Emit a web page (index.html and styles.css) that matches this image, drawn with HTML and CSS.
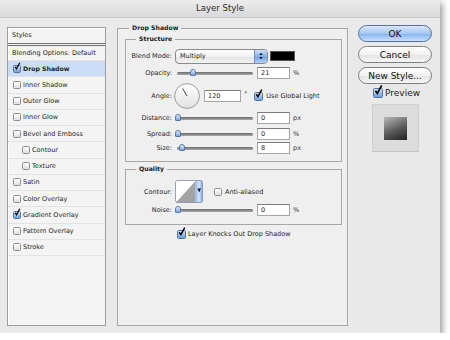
FILE: index.html
```html
<!DOCTYPE html>
<html lang="en">
<head>
  <meta charset="UTF-8" />
  <title>Layer Style</title>
  <link rel="stylesheet" href="styles.css">
</head>
<body>
<div class="window">
  <div class="titlebar">Layer Style</div>
  <div class="content">
    <div class="styles-list">
      <div class="list-head">Styles</div>
      <div class="list-row blending">Blending Options: Default</div>
      <div class="list-row selected"><span class="cb on"><svg viewBox="0 0 10 10"><path d="M1.8 4.6 L4.2 8 L9.6 -2"/></svg></span>Drop Shadow</div>
      <div class="list-row"><span class="cb"></span>Inner Shadow</div>
      <div class="list-row"><span class="cb"></span>Outer Glow</div>
      <div class="list-row"><span class="cb"></span>Inner Glow</div>
      <div class="list-row"><span class="cb"></span>Bevel and Emboss</div>
      <div class="list-row sub"><span class="cb"></span>Contour</div>
      <div class="list-row sub"><span class="cb"></span>Texture</div>
      <div class="list-row"><span class="cb"></span>Satin</div>
      <div class="list-row"><span class="cb"></span>Color Overlay</div>
      <div class="list-row"><span class="cb on"><svg viewBox="0 0 10 10"><path d="M1.8 4.6 L4.2 8 L9.6 -2"/></svg></span>Gradient Overlay</div>
      <div class="list-row"><span class="cb"></span>Pattern Overlay</div>
      <div class="list-row"><span class="cb"></span>Stroke</div>
    </div>

    <fieldset class="group main-group">
      <legend>Drop Shadow</legend>

      <fieldset class="group structure">
        <legend>Structure</legend>
        <div class="row r-blend">
          <label>Blend Mode:</label>
          <div class="popup">
            <span class="popup-text">Multiply</span>
            <span class="popup-arrows"><svg viewBox="0 0 5 9"><path d="M2.5 0.5 L4.6 3.4 H0.4 Z M2.5 8.5 L4.6 5.6 H0.4 Z"/></svg></span>
          </div>
          <span class="swatch"></span>
        </div>
        <div class="row r-opacity">
          <label>Opacity:</label>
          <div class="slider"><span class="thumb" style="left:15px"></span></div>
          <span class="field">21</span><span class="unit">%</span>
        </div>
        <div class="row r-angle">
          <label>Angle:</label>
          <svg class="dial" viewBox="0 0 26 26">
            <defs>
              <linearGradient id="dialfill" x1="0" y1="0" x2="0" y2="1">
                <stop offset="0" stop-color="#ffffff"/>
                <stop offset="1" stop-color="#e1e1e1"/>
              </linearGradient>
            </defs>
            <circle cx="13" cy="13" r="12.4" fill="url(#dialfill)" stroke="#858585" stroke-width="0.8"/>
            <path d="M13 13 L8.6 5.4" stroke="#444" stroke-width="1"/>
          </svg>
          <span class="field angle-field">120</span><span class="unit deg">°</span>
          <span class="cb lg on global"><svg viewBox="0 0 10 10"><path d="M1.8 4.6 L4.2 8 L9.6 -2"/></svg></span>
          <span class="check-text">Use Global Light</span>
        </div>
        <div class="row r-distance">
          <label>Distance:</label>
          <div class="slider"><span class="thumb" style="left:0px"></span></div>
          <span class="field">0</span><span class="unit">px</span>
        </div>
        <div class="row r-spread">
          <label>Spread:</label>
          <div class="slider"><span class="thumb" style="left:0px"></span></div>
          <span class="field">0</span><span class="unit">%</span>
        </div>
        <div class="row r-size">
          <label>Size:</label>
          <div class="slider"><span class="thumb" style="left:4px"></span></div>
          <span class="field">8</span><span class="unit">px</span>
        </div>
      </fieldset>

      <fieldset class="group quality">
        <legend>Quality</legend>
        <div class="row r-contour">
          <label>Contour:</label>
          <svg class="contour" viewBox="0 0 28 23">
            <defs>
              <linearGradient id="arrowfill" x1="0" y1="0" x2="1" y2="0">
                <stop offset="0" stop-color="#8fb6ea"/>
                <stop offset="0.5" stop-color="#d9e7fa"/>
                <stop offset="1" stop-color="#7aa6e2"/>
              </linearGradient>
            </defs>
            <rect x="0.5" y="0.5" width="20" height="22" fill="#fff"/>
            <path d="M1 22.5 L20.5 1 V22.5 Z" fill="#a3a3a3"/>
            <path d="M20.5 0.5 H25 Q27.5 0.5 27.5 3 V20 Q27.5 22.5 25 22.5 H20.5 Z" fill="url(#arrowfill)"/>
            <rect x="0.5" y="0.5" width="27" height="22" rx="2" fill="none" stroke="#7f8ea5" stroke-width="0.8"/>
            <path d="M22.4 8.5 H26 L24.2 12.5 Z" fill="#111"/>
          </svg>
          <span class="cb aa"></span>
          <span class="check-text">Anti-aliased</span>
        </div>
        <div class="row r-noise">
          <label>Noise:</label>
          <div class="slider"><span class="thumb" style="left:0px"></span></div>
          <span class="field">0</span><span class="unit">%</span>
        </div>
      </fieldset>

      <div class="knock">
        <span class="cb lg on"><svg viewBox="0 0 10 10"><path d="M1.8 4.6 L4.2 8 L9.6 -2"/></svg></span>
        <span class="check-text">Layer Knocks Out Drop Shadow</span>
      </div>
    </fieldset>

    <div class="buttons">
      <button class="btn default">OK</button>
      <button class="btn">Cancel</button>
      <button class="btn">New Style...</button>
      <div class="preview-check">
        <span class="cb xl on"><svg viewBox="0 0 10 10"><path d="M1.8 4.6 L4.2 8 L9.6 -2"/></svg></span>
        Preview
      </div>
      <div class="preview-box"><div class="preview-swatch"></div></div>
    </div>
  </div>
</div>
</body>
</html>
```

FILE: styles.css
```css
* {
  box-sizing: border-box;
}
html, body {
  margin: 0;
  padding: 0;
  background: #ffffff;
  font-family: "DejaVu Sans", Verdana, sans-serif;
  color: #1e1e1e;
}
.window {
  width: 440px;
  height: 333px;
  background: #e9e9e9;
  box-shadow: 2px 3px 7px rgba(0,0,0,0.45);
}
.titlebar {
  height: 18px;
  line-height: 17px;
  text-align: center;
  font-size: 8.5px;
  color: #2b2b2b;
  background: linear-gradient(#ececec, #d9d9d9);
  border-bottom: 1px solid #c8c8c8;
}
.content {
  display: flex;
  align-items: flex-start;
  padding: 6px 0 0 7px;
}

/* style list on the left */
.styles-list {
  width: 99px;
  height: 299px;
  margin-top: 3px;
  background: #f4f4f4;
  border: 1px solid #9d9d9d;
  box-shadow: inset 1px 1px 0 #ffffff;
  font-size: 6.5px;
}
.list-head {
  height: 18px;
  line-height: 15px;
  padding-left: 4px;
  border-bottom: 3px double #6f6f6f;
}
.list-row {
  display: flex;
  align-items: center;
  gap: 2px;
  height: 16.25px;
  padding-left: 5px;
  border-bottom: 1px solid #e3e3e3;
}
.list-row.blending {
  height: 15px;
  padding-left: 4px;
}
.list-row.sub {
  padding-left: 14px;
}
.list-row.selected {
  background: #cadcf6;
  font-weight: bold;
  font-size: 6.2px;
}

/* checkboxes */
.cb {
  position: relative;
  flex: none;
  display: inline-block;
  width: 8px;
  height: 8px;
  border: 1px solid #8d8d8d;
  border-radius: 1.5px;
  background: linear-gradient(#ffffff, #dedede);
}
.cb.lg {
  width: 9px;
  height: 9px;
}
.cb.xl {
  width: 10px;
  height: 10px;
}
.cb.on {
  background: linear-gradient(#d3e3f8, #6f9fe0);
  border-color: #53739f;
}
.cb svg {
  position: absolute;
  left: 0;
  top: -2px;
  width: 100%;
  height: 100%;
  overflow: visible;
  fill: none;
  stroke: #000000;
  stroke-width: 2.1;
}

/* group boxes */
.group {
  margin: 0;
  padding: 0;
  border: 1px solid #a7a7a7;
  background: #efefef;
  min-inline-size: 0;
}
.group > legend {
  padding: 0 3px;
  line-height: 8px;
  font-size: 6.2px;
  font-weight: bold;
  color: #222;
}
.main-group {
  width: 231px;
  height: 302px;
  margin-left: 11px;
  padding: 0 6px 0 7px;
}
.main-group > legend {
  margin-left: 4px;
}
.structure {
  width: 217px;
  height: 127px;
  margin-top: 3px;
  padding-top: 5px;
}
.quality {
  width: 217px;
  height: 60px;
  margin-top: 3px;
  padding-top: 7px;
}
.structure > legend, .quality > legend {
  margin-left: 10px;
}

/* rows of controls */
.row {
  display: flex;
  align-items: center;
  font-size: 6.5px;
}
.row > label {
  flex: none;
  width: 46px;
  text-align: right;
  color: #262626;
}
.r-blend { height: 16px; }
.r-opacity { height: 18px; }
.r-angle { height: 28px; }
.r-distance { height: 16px; }
.r-spread { height: 15px; }
.r-size { height: 14px; }
.r-contour { height: 23px; }
.r-noise { height: 14px; }

.popup {
  display: flex;
  width: 93px;
  height: 15px;
  margin-left: 3px;
  border: 1px solid #8a8a8a;
  border-radius: 4px;
  background: linear-gradient(#ffffff, #f1f1f1 50%, #e4e4e4 51%, #f3f3f3);
  overflow: hidden;
}
.popup-text {
  flex: 1;
  padding-left: 4px;
  line-height: 13px;
}
.popup-arrows {
  width: 13px;
  display: flex;
  align-items: center;
  justify-content: center;
  border-left: 1px solid #6f8fbf;
  background: linear-gradient(#cfe0f8, #85b0ea 50%, #6b9fe4 51%, #b6d2f7);
}
.popup-arrows svg {
  width: 4px;
  height: 8px;
  fill: #111;
}
.swatch {
  width: 25px;
  height: 10px;
  margin-left: 2px;
  background: #000000;
  border: 1px solid #555;
}

.slider {
  position: relative;
  flex: none;
  width: 78px;
  height: 8px;
  margin-left: 3px;
}
.slider::before {
  content: "";
  position: absolute;
  left: 2px;
  right: 0;
  top: 3px;
  height: 3px;
  border-radius: 2px;
  background: linear-gradient(#6b6b6b, #a9a9a9);
}
.thumb {
  position: absolute;
  top: 0;
  width: 6px;
  height: 7px;
  border-radius: 3px 3px 1px 1px;
  border: 1px solid #5677a8;
  background: linear-gradient(#e6eefa, #75a2e2);
}
.field {
  flex: none;
  width: 33px;
  height: 12px;
  margin-left: 4px;
  padding-left: 3px;
  line-height: 10px;
  background: #ffffff;
  border: 1px solid #a5a5a5;
  border-top-color: #7c7c7c;
}
.unit {
  margin-left: 3px;
  color: #333;
}
.dial {
  flex: none;
  width: 26px;
  height: 26px;
  margin-left: 2px;
}
.angle-field {
  width: 37px;
}
.deg {
  align-self: flex-start;
  margin-top: 8px;
}
.cb.global {
  margin-left: 7px;
}
.check-text {
  margin-left: 3px;
}
.contour {
  flex: none;
  width: 28px;
  height: 23px;
  margin-left: 3px;
}
.cb.aa {
  margin-left: 11px;
}
.knock {
  display: flex;
  align-items: center;
  height: 10px;
  margin: 4px 0 0 52px;
  font-size: 6.5px;
}
.knock .check-text {
  margin-left: 2px;
}

/* buttons column */
.buttons {
  display: flex;
  flex-direction: column;
  width: 74px;
  margin: 1px 0 0 10px;
}
.btn {
  height: 17px;
  margin: 0 0 4px;
  padding: 0;
  font-family: "DejaVu Sans", Verdana, sans-serif;
  font-size: 9px;
  color: #111;
  border: 1px solid #7e7e7e;
  border-radius: 9px;
  background: linear-gradient(#ffffff, #f1f1f1 50%, #e2e2e2 51%, #f6f6f6);
}
.btn.default {
  border-color: #5873a3;
  background: linear-gradient(#dbe8fa, #a6c7f1 50%, #86b3ee 51%, #c9e0fc);
}
.preview-check {
  display: flex;
  align-items: center;
  gap: 2px;
  height: 10px;
  padding-left: 15px;
  font-size: 9px;
}
.preview-box {
  display: flex;
  align-items: center;
  justify-content: center;
  width: 47px;
  height: 48px;
  margin: 6px 0 0 14px;
  background: #dcdcdc;
  border: 1px solid #d0d0d0;
  border-bottom-color: #c4c4c4;
}
.preview-swatch {
  width: 23px;
  height: 23px;
  background: linear-gradient(155deg, #b9b9b9, #5a5a5a 55%, #1f1f1f);
}
```
